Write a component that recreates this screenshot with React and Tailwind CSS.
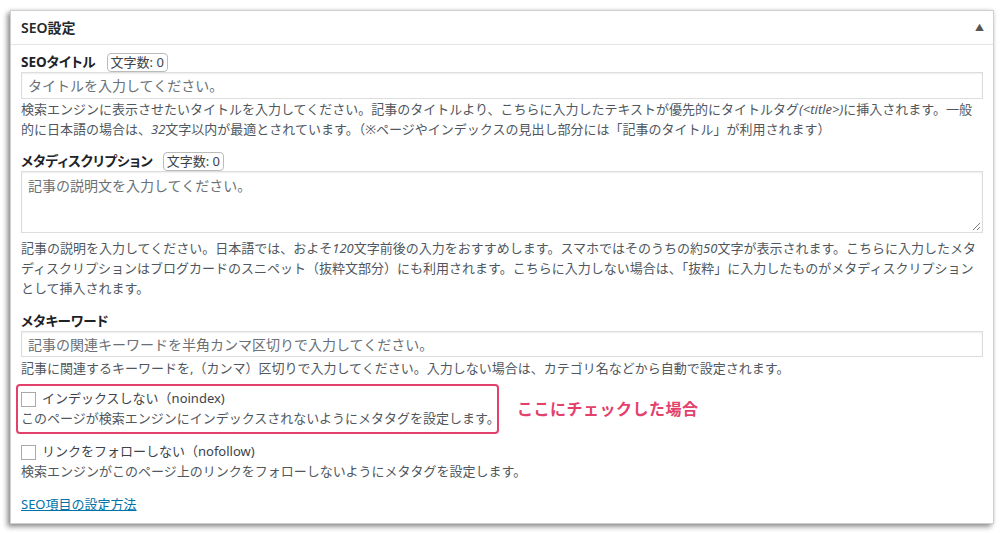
export default function App() {
  const font = { fontFamily: '"Noto Sans", "Noto Sans CJK JP", sans-serif' }

  return (
    <div className="w-[1003px] h-[534px] bg-white pt-[10px] pl-[10px]" style={font}>
      <div className="w-[984px] h-[514px] bg-white border border-[#ccd0d4] shadow-[-3px_3px_5px_rgba(0,0,0,0.4),0_0_4px_rgba(0,0,0,0.12)]">
        {/* ヘッダー */}
        <div className="h-[34px] flex items-center justify-between pl-[10px] pr-[9px] border-b border-[#e5e5e5]">
          <h2 className="text-[14px] font-semibold text-[#23282d] leading-none">SEO設定</h2>
          <span className="text-[9px] text-[#555] leading-none">▲</span>
        </div>

        <div className="px-[10px] pt-[7px] text-[#3c434a]">
          {/* SEOタイトル */}
          <div className="flex items-center h-[20px]">
            <span className="text-[13.5px] font-bold text-[#1d2327] [font-feature-settings:'palt']">SEOタイトル</span>
            <span className="ml-[11px] h-[19px] flex items-center px-[3px] border border-[#bbb] rounded-[4px] text-[13px] leading-none bg-white">
              文字数: 0
            </span>
          </div>
          <div className="h-[27px] border border-[#ddd] shadow-[inset_0_1px_2px_rgba(0,0,0,0.07)] flex items-center px-[6px] text-[14px] text-[#6b7075]">
            タイトルを入力してください。
          </div>
          <p className="text-[13px] leading-[20px] text-[#50575e]">
            検索エンジンに表示させたいタイトルを入力してください。記事のタイトルより、こちらに入力したテキストが優先的にタイトルタグ<i>(&lt;title&gt;)</i>に挿入されます。一般的に日本語の場合は、<i>32</i>文字以内が最適とされています。（※ページやインデックスの見出し部分には「記事のタイトル」が利用されます）
          </p>

          {/* メタディスクリプション */}
          <div className="mt-[12px] flex items-center h-[20px]">
            <span className="text-[13.5px] font-bold text-[#1d2327] [font-feature-settings:'palt']">メタディスクリプション</span>
            <span className="ml-[10px] h-[19px] flex items-center px-[3px] border border-[#bbb] rounded-[4px] text-[13px] leading-none bg-white">
              文字数: 0
            </span>
          </div>
          <div className="relative h-[62px] border border-[#ddd] shadow-[inset_0_1px_2px_rgba(0,0,0,0.07)] px-[6px] pt-[3px] text-[14px] text-[#6b7075]">
            記事の説明文を入力してください。
            <svg className="absolute right-[1px] bottom-[1px] w-[9px] h-[9px]" viewBox="0 0 9 9">
              <path d="M8 1 L1 8 M8 5 L5 8" stroke="#777" strokeWidth="1" fill="none" />
            </svg>
          </div>
          <p className="mt-[5px] text-[13px] leading-[20px] text-[#50575e]">
            記事の説明を入力してください。日本語では、およそ<i>120</i>文字前後の入力をおすすめします。スマホではそのうちの約<i>50</i>文字が表示されます。こちらに入力したメタディスクリプションはブログカードのスニペット（抜粋文部分）にも利用されます。こちらに入力しない場合は、「抜粋」に入力したものがメタディスクリプションとして挿入されます。
          </p>

          {/* メタキーワード */}
          <div className="mt-[13px] flex items-center h-[20px]">
            <span className="text-[13.5px] font-bold text-[#1d2327] [font-feature-settings:'palt']">メタキーワード</span>
          </div>
          <div className="h-[26px] border border-[#ddd] shadow-[inset_0_1px_2px_rgba(0,0,0,0.07)] flex items-center px-[6px] text-[14px] text-[#6b7075]">
            記事の関連キーワードを半角カンマ区切りで入力してください。
          </div>
          <p className="mt-[1px] text-[13px] leading-[20px] text-[#50575e]">
            記事に関連するキーワードを,（カンマ）区切りで入力してください。入力しない場合は、カテゴリ名などから自動で設定されます。
          </p>

          {/* noindex */}
          <div className="mt-[6px] flex items-center">
            <div className="-ml-[5px] w-[483px] h-[50px] border-2 border-[#e3406c] rounded-[4px] pl-[3px] pt-[4px]">
              <label className="flex items-center h-[18px]">
                <span className="w-[15px] h-[15px] border border-[#aaa] bg-white shrink-0" />
                <span className="ml-[6px] text-[13px] text-[#3c434a]">インデックスしない（noindex)</span>
              </label>
              <p className="text-[13px] leading-[20px] text-[#50575e] whitespace-nowrap">
                このページが検索エンジンにインデックスされないようにメタタグを設定します。
              </p>
            </div>
            <span className="ml-[18px] text-[16px] font-bold text-[#e3406c] tracking-[0.5px]">ここにチェックした場合</span>
          </div>

          {/* nofollow */}
          <div className="mt-[9px]">
            <label className="flex items-center h-[18px]">
              <span className="w-[15px] h-[15px] border border-[#aaa] bg-white shrink-0" />
              <span className="ml-[6px] text-[13px] text-[#3c434a]">リンクをフォローしない（nofollow)</span>
            </label>
            <p className="text-[13px] leading-[20px] text-[#50575e]">
              検索エンジンがこのページ上のリンクをフォローしないようにメタタグを設定します。
            </p>
          </div>

          <a href="#" className="block mt-[13px] text-[13px] leading-[20px] text-[#0073aa] underline">
            SEO項目の設定方法
          </a>
        </div>
      </div>
    </div>
  )
}
